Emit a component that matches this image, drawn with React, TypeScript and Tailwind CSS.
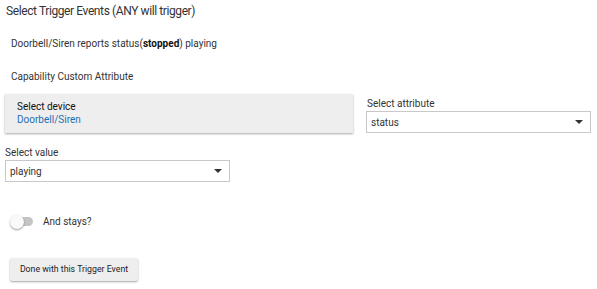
import React from 'react';

function Caret() {
  return (
    <svg width="8" height="4" viewBox="0 0 8 4" className="shrink-0">
      <path d="M0 0 L8 0 L4 4 Z" fill="#333" />
    </svg>
  );
}

function SelectBox({ value, className }: { value: string; className: string }) {
  return (
    <div className={`flex items-center justify-between border border-[#c8c8c8] bg-white pl-[4px] pr-[7px] text-[10px] text-[#333] ${className}`}>
      <span>{value}</span>
      <Caret />
    </div>
  );
}

export default function App() {
  return (
    <div className="w-[597px] h-[289px] bg-white overflow-hidden text-[#222]" style={{ fontFamily: 'Roboto, "Liberation Sans", sans-serif' }}>
      <div className="pl-[6px] pt-[3px] text-[12px] tracking-[-0.4px] leading-[16px] text-[#333]">
        Select Trigger Events (ANY will trigger)
      </div>

      <div className="pl-[11px] mt-[18px] text-[10px] leading-[14px] text-[#333]">
        Doorbell/Siren reports status(<b className="font-bold text-[#111]">stopped</b>) playing
      </div>

      <div className="pl-[11px] mt-[19px] text-[10px] leading-[14px] text-[#333]">
        Capability Custom Attribute
      </div>

      {/* device + attribute row */}
      <div className="flex mt-[10px] ml-[5px] gap-[13px]">
        <div className="w-[348px] h-[39px] bg-[#eeeeee] shadow-[0_1px_2px_rgba(0,0,0,0.35)] pl-[12px] pt-[6px] text-[10px] leading-[13px]">
          <div className="text-[#111]">Select device</div>
          <div className="text-[#1f6fb2]">Doorbell/Siren</div>
        </div>
        <div className="flex flex-col">
          <div className="pl-[1px] pt-[3px] text-[10px] leading-[14px] text-[#333]">Select attribute</div>
          <SelectBox value="status" className="w-[225px] h-[22px]" />
        </div>
      </div>

      <div className="ml-[5px] mt-[13px] text-[10px] leading-[14px] text-[#333]">Select value</div>
      <SelectBox value="playing" className="ml-[5px] w-[225px] h-[22px]" />

      {/* toggle */}
      <div className="flex items-center ml-[10px] mt-[32px] gap-[10px]">
        <div className="relative w-[23px] h-[14px] flex items-center">
          <div className="ml-[3px] w-[20px] h-[9px] rounded-full bg-[#c4c4c4]" />
          <div className="absolute left-0 top-0 w-[14px] h-[14px] rounded-full bg-[#fafafa] shadow-[0_1px_2px_rgba(0,0,0,0.4)]" />
        </div>
        <span className="text-[10px] text-[#333]">And stays?</span>
      </div>

      <div className="ml-[10px] mt-[26px]">
        <button className="w-[128px] h-[23px] bg-[#eeeeee] shadow-[0_1px_2px_rgba(0,0,0,0.35)] text-[8.75px] text-[#222] rounded-[2px]">
          Done with this Trigger Event
        </button>
      </div>
    </div>
  );
}
